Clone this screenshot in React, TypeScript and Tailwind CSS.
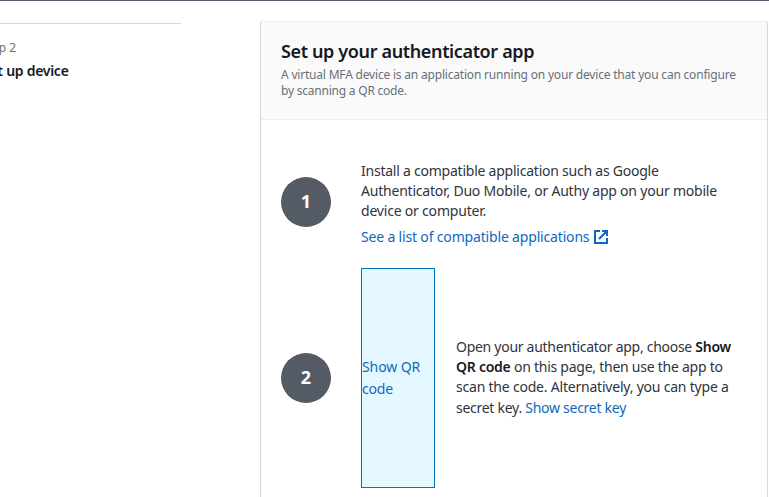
import React from "react";

function Line({ className = "", children }: { className?: string; children: React.ReactNode }) {
  return <span className={"block w-max whitespace-nowrap " + className}>{children}</span>;
}

function StepBadge({ n }: { n: number }) {
  return (
    <div className="flex size-[50px] shrink-0 items-center justify-center rounded-full bg-[#545b64] pb-0.5 font-['Open_Sans',sans-serif] text-[18px] font-bold text-white">
      {n}
    </div>
  );
}

export default function App() {
  return (
    <div className="flex h-[497px] w-[769px] flex-col overflow-hidden bg-white font-['Noto_Sans','Open_Sans',sans-serif] text-[14px] leading-5 text-[#2f343c]">
      <div className="h-px w-full shrink-0 bg-[#545b6c]" />
      <div className="flex min-h-0 flex-1">
        <nav className="mr-[79px] w-[181px] shrink-0 pt-[22px]">
          <div className="border-t border-[#d5dbdb] pt-[14px]">
            <Line className="-ml-[19px] text-[12px] leading-5 text-[#687078]">Step 2</Line>
            <Line className="-ml-[18px] mt-[3px] text-[14px] font-semibold tracking-[-0.27px] text-[#16191f]">Set up device</Line>
          </div>
        </nav>
        <section className="mt-5 h-[500px] w-[508px] shrink-0 rounded-t-[2px] border border-[#d5dbdb] border-t-[#eaeded]">
          <header className="h-[98px] border-b border-[#eaeded] bg-[#fafafa] px-5 pt-[18px]">
            <h1 className="text-[18px] font-semibold leading-[22px] text-[#16191f]">
              <Line className="tracking-[-0.36px]">Set up your authenticator app</Line>
            </h1>
            <p className="mt-[5px] text-[12px] leading-4 text-[#687078]">
              <Line className="tracking-[-0.195px]">A virtual MFA device is an application running on your device that you can configure</Line>
              <Line className="tracking-[-0.22px]">by scanning a QR code.</Line>
            </p>
          </header>
          <div className="px-5 pt-[41px]">
            <div className="flex">
              <div className="mr-[30px] pt-4">
                <StepBadge n={1} />
              </div>
              <div className="h-[107px]">
                <Line className="tracking-[-0.234px]">Install a compatible application such as Google</Line>
                <Line className="tracking-[-0.21px]">Authenticator, Duo Mobile, or Authy app on your mobile</Line>
                <Line className="tracking-[-0.2px]">device or computer.</Line>
                <a className="mt-[5px] flex items-center text-[#0f68c0]">
                  <Line className="leading-[22px] tracking-[-0.17px]">See a list of compatible applications</Line>
                  <svg className="ml-[5px]" width="14" height="14" viewBox="0 0 14 14" fill="none" stroke="currentColor" strokeWidth="2">
                    <path d="M6 1H1v12h12V8M8 1h5v5" />
                    <path d="M12.5 1.5 5 9" strokeWidth="2.2" />
                  </svg>
                </a>
              </div>
            </div>
            <div className="flex items-center">
              <div className="mr-[30px]">
                <StepBadge n={2} />
              </div>
              <div className="flex h-[220px] w-[74px] shrink-0 items-center border border-[#0073bb] bg-[#e6f8ff] leading-[22px] text-[#0f68c0]">
                <a>
                  <Line className="tracking-[-0.1px]">Show QR</Line>
                  <Line className="tracking-[-0.2px]">code</Line>
                </a>
              </div>
              <div className="ml-[21px]">
                <Line className="tracking-[-0.28px]">
                  Open your authenticator app, choose <b className="font-semibold text-[#16191f]">Show</b>
                </Line>
                <Line className="tracking-[-0.25px]">
                  <b className="font-semibold text-[#16191f]">QR code</b> on this page, then use the app to
                </Line>
                <Line className="tracking-[-0.21px]">scan the code. Alternatively, you can type a</Line>
                <Line className="leading-[22px] tracking-[-0.27px]">
                  secret key. <a className="text-[#0f68c0]">Show secret key</a>
                </Line>
              </div>
            </div>
          </div>
        </section>
      </div>
    </div>
  );
}
